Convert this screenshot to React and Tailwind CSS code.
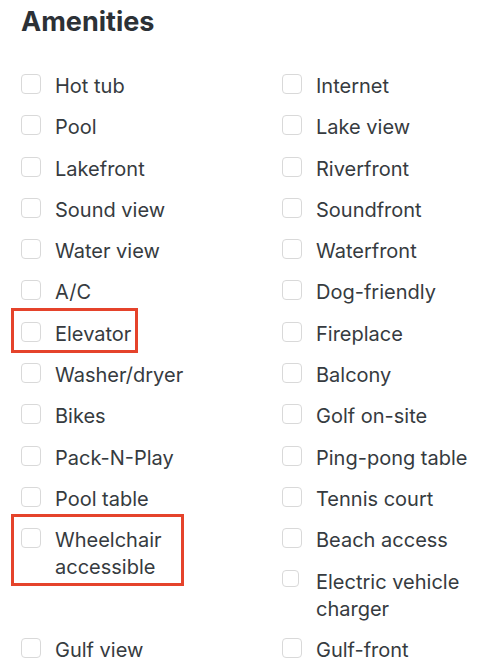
const left = [
  "Hot tub",
  "Pool",
  "Lakefront",
  "Sound view",
  "Water view",
  "A/C",
  "Elevator",
  "Washer/dryer",
  "Bikes",
  "Pack-N-Play",
  "Pool table",
  "Wheelchair accessible",
];

const right = [
  "Internet",
  "Lake view",
  "Riverfront",
  "Soundfront",
  "Waterfront",
  "Dog-friendly",
  "Fireplace",
  "Balcony",
  "Golf on-site",
  "Ping-pong table",
  "Tennis court",
  "Beach access",
  "Electric vehicle charger",
];

// annotation boxes drawn over the screenshot
const marked = {
  Elevator: "w-[127px]",
  "Wheelchair accessible": "w-[173px]",
};

function Amenity({ label }) {
  const small = label === "Electric vehicle charger";
  const wraps = small || label === "Wheelchair accessible";
  return (
    <label className="relative flex items-start gap-[14px]">
      <span
        className={
          small
            ? "mt-[1px] w-[17px] h-[17px] shrink-0 rounded-[4px] border border-[#d9d9d9] bg-white"
            : "mt-[1px] w-5 h-5 shrink-0 rounded-[4px] border border-[#d9d9d9] bg-white"
        }
      />
      <span className={wraps ? (small ? "pl-[3px] w-[150px]" : "w-[120px]") : "whitespace-nowrap"}>
        {label}
      </span>
      {marked[label] && (
        <span
          className={`absolute -left-[10px] -top-[13px] -bottom-[5px] border-[3px] border-[#e5432b] pointer-events-none ${marked[label]}`}
        />
      )}
    </label>
  );
}

export default function App() {
  return (
    <div className="bg-white min-h-[669px] w-[480px] text-[#363b40] font-['Inter',sans-serif] text-[20px] leading-[27px] overflow-hidden">
      <h2 className="pl-[21px] pt-[4px] text-[27px] leading-[36px] font-bold text-[#2c3136]">
        Amenities
      </h2>
      <div className="grid grid-cols-[261px_1fr] pl-[21px] pt-[33px]">
        <div className="flex flex-col gap-[14.3px]">
          {left.map((a) => (
            <Amenity key={a} label={a} />
          ))}
        </div>
        <div className="flex flex-col gap-[14.3px]">
          {right.map((a) => (
            <Amenity key={a} label={a} />
          ))}
        </div>
      </div>
      <div className="grid grid-cols-[261px_1fr] pl-[21px] pt-[14.3px]">
        <Amenity label="Gulf view" />
        <Amenity label="Gulf-front" />
      </div>
    </div>
  );
}
